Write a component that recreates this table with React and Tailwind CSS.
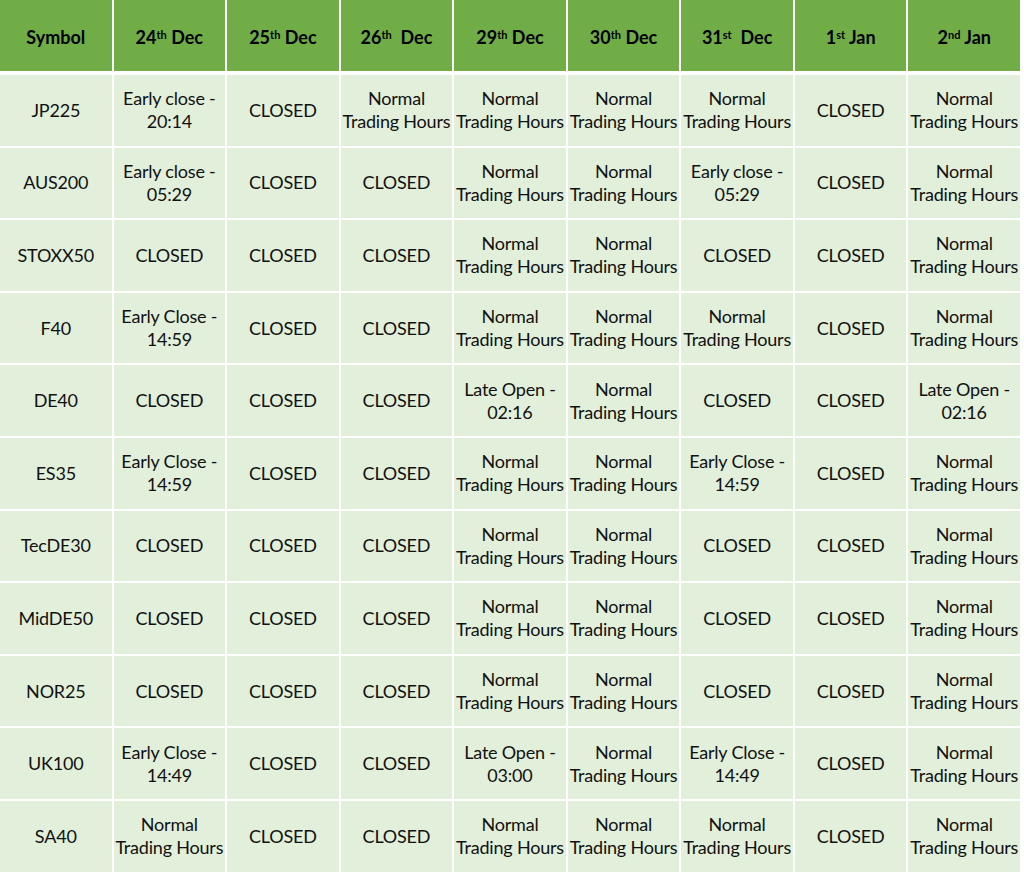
const headers = [
  { day: null, label: 'Symbol' },
  { day: '24', sup: 'th', mon: 'Dec' },
  { day: '25', sup: 'th', mon: 'Dec' },
  { day: '26', sup: 'th', mon: 'Dec', wide: true },
  { day: '29', sup: 'th', mon: 'Dec' },
  { day: '30', sup: 'th', mon: 'Dec' },
  { day: '31', sup: 'st', mon: 'Dec', wide: true },
  { day: '1', sup: 'st', mon: 'Jan' },
  { day: '2', sup: 'nd', mon: 'Jan' },
];

const N = 'Normal\nTrading Hours';
const C = 'CLOSED';

const rows = [
  ['JP225', 'Early close -\n20:14', C, N, N, N, N, C, N],
  ['AUS200', 'Early close -\n05:29', C, C, N, N, 'Early close -\n05:29', C, N],
  ['STOXX50', C, C, C, N, N, C, C, N],
  ['F40', 'Early Close -\n14:59', C, C, N, N, N, C, N],
  ['DE40', C, C, C, 'Late Open -\n02:16', N, C, C, 'Late Open -\n02:16'],
  ['ES35', 'Early Close -\n14:59', C, C, N, N, 'Early Close -\n14:59', C, N],
  ['TecDE30', C, C, C, N, N, C, C, N],
  ['MidDE50', C, C, C, N, N, C, C, N],
  ['NOR25', C, C, C, N, N, C, C, N],
  ['UK100', 'Early Close -\n14:49', C, C, 'Late Open -\n03:00', N, 'Early Close -\n14:49', C, N],
  ['SA40', N, C, C, N, N, N, C, N],
];

const Header = ({ h }) => (
  <div className="bg-[#70ad47] flex items-center justify-center h-[71px] pt-[4px] font-bold text-[18px] text-black whitespace-pre">
    {h.label ? (
      h.label
    ) : (
      <span>
        {h.day}
        <sup className="text-[11px]">{h.sup}</sup>
        {h.wide ? '  ' : ' '}
        {h.mon}
      </span>
    )}
  </div>
);

export default function App() {
  return (
    <div
      className="bg-white w-[1024px] h-[874px]"
      style={{ fontFamily: 'Lato, "Open Sans", sans-serif' }}
    >
      <div className="w-[1020px] grid grid-cols-9 gap-x-[2px]">
        {headers.map((h, i) => (
          <Header key={i} h={h} />
        ))}
      </div>
      <div className="w-[1020px] grid grid-cols-9 gap-x-[2px] gap-y-[2px] mt-[4px]">
        {rows.map((r, ri) =>
          r.map((cell, ci) => (
            <div
              key={ri + '-' + ci}
              className="bg-[#e2efda] h-[70.6px] flex items-center justify-center text-center text-[18px] leading-[23px] text-[#111] whitespace-pre-line tracking-[-0.2px]"
            >
              {cell}
            </div>
          ))
        )}
      </div>
    </div>
  );
}
